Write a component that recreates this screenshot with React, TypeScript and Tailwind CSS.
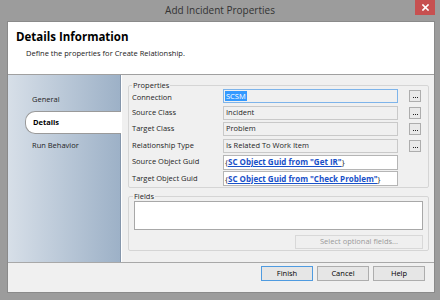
import React from "react";

const font = { fontFamily: '"Open Sans", "Noto Sans", "Liberation Sans", sans-serif' };

function Dots() {
  return (
    <div className="w-[12px] h-[12px] border border-[#adadad] bg-[#e9e9e9] flex items-end justify-center gap-[1px] pb-[3px]">
      <div className="w-[1px] h-[1px] bg-[#222]" />
      <div className="w-[1px] h-[1px] bg-[#222]" />
      <div className="w-[1px] h-[1px] bg-[#222]" />
    </div>
  );
}

function Row({
  label,
  children,
  button,
  labelPad,
}: {
  label: string;
  children: React.ReactNode;
  button?: boolean;
  labelPad?: boolean;
}) {
  return (
    <div className="flex items-center h-[14px] mb-[2.5px]">
      <div
        className={
          "w-[94px] pl-[3px] text-[7.5px] text-[#1e1e1e] leading-none " + (labelPad ? "pt-[4px]" : "")
        }
      >
        {label}
      </div>
      {children}
      <div className="w-[11px]" />
      {button ? <Dots /> : <div className="w-[12px]" />}
    </div>
  );
}

function ROBox({ text }: { text: string }) {
  return (
    <div className="w-[175px] h-[14px] border border-[#c9c9c9] bg-[#f0f0f0] flex items-center px-[2px] text-[7.5px] text-[#1e1e1e] leading-none">
      {text}
    </div>
  );
}

function GuidBox({ text }: { text: string }) {
  return (
    <div className="w-[175px] h-[15px] border border-[#b5b5b5] bg-white flex items-center px-[1px] text-[8px] leading-none">
      <span className="text-[#222]">{"{"}</span>
      <span className="text-[#1750c8] font-bold underline">{text}</span>
      <span className="text-[#222]">{"}"}</span>
    </div>
  );
}

function Btn({ label, def }: { label: string; def?: boolean }) {
  return (
    <div
      className={
        "w-[52px] h-[15px] flex items-center justify-center text-[7.5px] text-black leading-none bg-[#e6e6e6] border " +
        (def ? "border-[#4f9be0]" : "border-[#adadad]")
      }
    >
      {label}
    </div>
  );
}

export default function App() {
  return (
    <div className="w-[440px] h-[300px] bg-[#9c9c9c] flex flex-col relative overflow-hidden" style={font}>
      {/* title bar */}
      <div className="h-[21px] flex items-center justify-center text-[10px] text-[#333] pb-[1px]">
        Add Incident Properties
      </div>
      <div className="absolute top-0 right-[5px] w-[20px] h-[15px] bg-[#c75050] flex items-center justify-center">
        <svg width="7" height="7" viewBox="0 0 7 7">
          <path d="M1 1 L6 6 M6 1 L1 6" stroke="white" strokeWidth="1.6" strokeLinecap="square" />
        </svg>
      </div>

      {/* client */}
      <div className="ml-[7px] mr-[5px] h-[272px] border border-[#8a8a8a] flex flex-col bg-[#f0f0f0]">
        {/* header */}
        <div className="h-[53px] bg-white border-b border-[#a0a0a0] pl-[8px] pt-[7px]">
          <div className="text-[11.5px] font-bold text-black leading-[16px]">Details Information</div>
          <div className="text-[7.5px] text-[#222] pl-[10px] mt-[3px] leading-[10px]">
            Define the properties for Create Relationship.
          </div>
        </div>

        {/* body */}
        <div className="h-[188px] flex border-b border-[#a8a8a8]">
          {/* left nav */}
          <div className="w-[113px] h-full bg-gradient-to-r from-[#d7dfe8] to-[#9db1c7] border-r border-[#8596ab] relative flex flex-col pt-[19px]">
            <div className="pl-[24px] text-[7.5px] text-[#1e1e1e] leading-[10px] h-[10px]">General</div>
            <div className="ml-[17px] mr-[-1px] mt-[7px] h-[23px] bg-white border border-[#9a9a9a] border-r-0 rounded-l-[10px] flex items-center pl-[7px] text-[7.5px] font-bold text-black">
              Details
            </div>
            <div className="pl-[24px] mt-[6px] text-[7.5px] text-[#1e1e1e] leading-[10px]">Run Behavior</div>
          </div>

          {/* right content */}
          <div className="flex-1 flex flex-col pl-[6px] pr-[5px] pt-[6px] border-l border-white">
            <fieldset className="border border-[#d5d5d5] rounded-[2px] h-[107px] px-[0px]">
              <legend className="ml-[3px] px-[1px] text-[7.5px] text-[#1e1e1e] leading-[8px]">Properties</legend>
              <div>
                <Row label="Connection" button labelPad>
                  <div className="w-[175px] h-[14px] border border-[#7eb4ea] bg-[#f0f0f0] flex items-center px-[1px]">
                    <span className="bg-[#3399ff] text-white text-[7.5px] leading-[10px] px-[1px]">SCSM</span>
                  </div>
                </Row>
                <Row label="Source Class" button>
                  <ROBox text="Incident" />
                </Row>
                <Row label="Target Class" button>
                  <ROBox text="Problem" />
                </Row>
                <Row label="Relationship Type" button>
                  <ROBox text="Is Related To Work Item" />
                </Row>
                <Row label="Source Object Guid">
                  <GuidBox text={'SC Object Guid from "Get IR"'} />
                </Row>
                <Row label="Target Object Guid">
                  <GuidBox text={'SC Object Guid from "Check Problem"'} />
                </Row>
              </div>
            </fieldset>

            <fieldset className="mt-[3px] border border-[#d5d5d5] rounded-[2px] h-[60px] px-[5px]">
              <legend className="ml-[-1px] px-[1px] text-[7.5px] text-[#1e1e1e] leading-[10px]">Fields</legend>
              <div className="h-[29px] bg-white border border-[#a8a8a8]" />
              <div className="flex justify-end mt-[5px]">
                <div className="w-[128px] h-[14px] border border-[#d8d8d8] bg-[#efefef] flex items-center justify-center text-[7.5px] text-[#9a9a9a] leading-none">
                  Select optional fields...
                </div>
              </div>
            </fieldset>
          </div>
        </div>

        {/* footer */}
        <div className="flex-1 flex justify-end items-start gap-[4px] pr-[9px] pt-[3px]">
          <Btn label="Finish" def />
          <Btn label="Cancel" />
          <Btn label="Help" />
        </div>
      </div>
    </div>
  );
}
